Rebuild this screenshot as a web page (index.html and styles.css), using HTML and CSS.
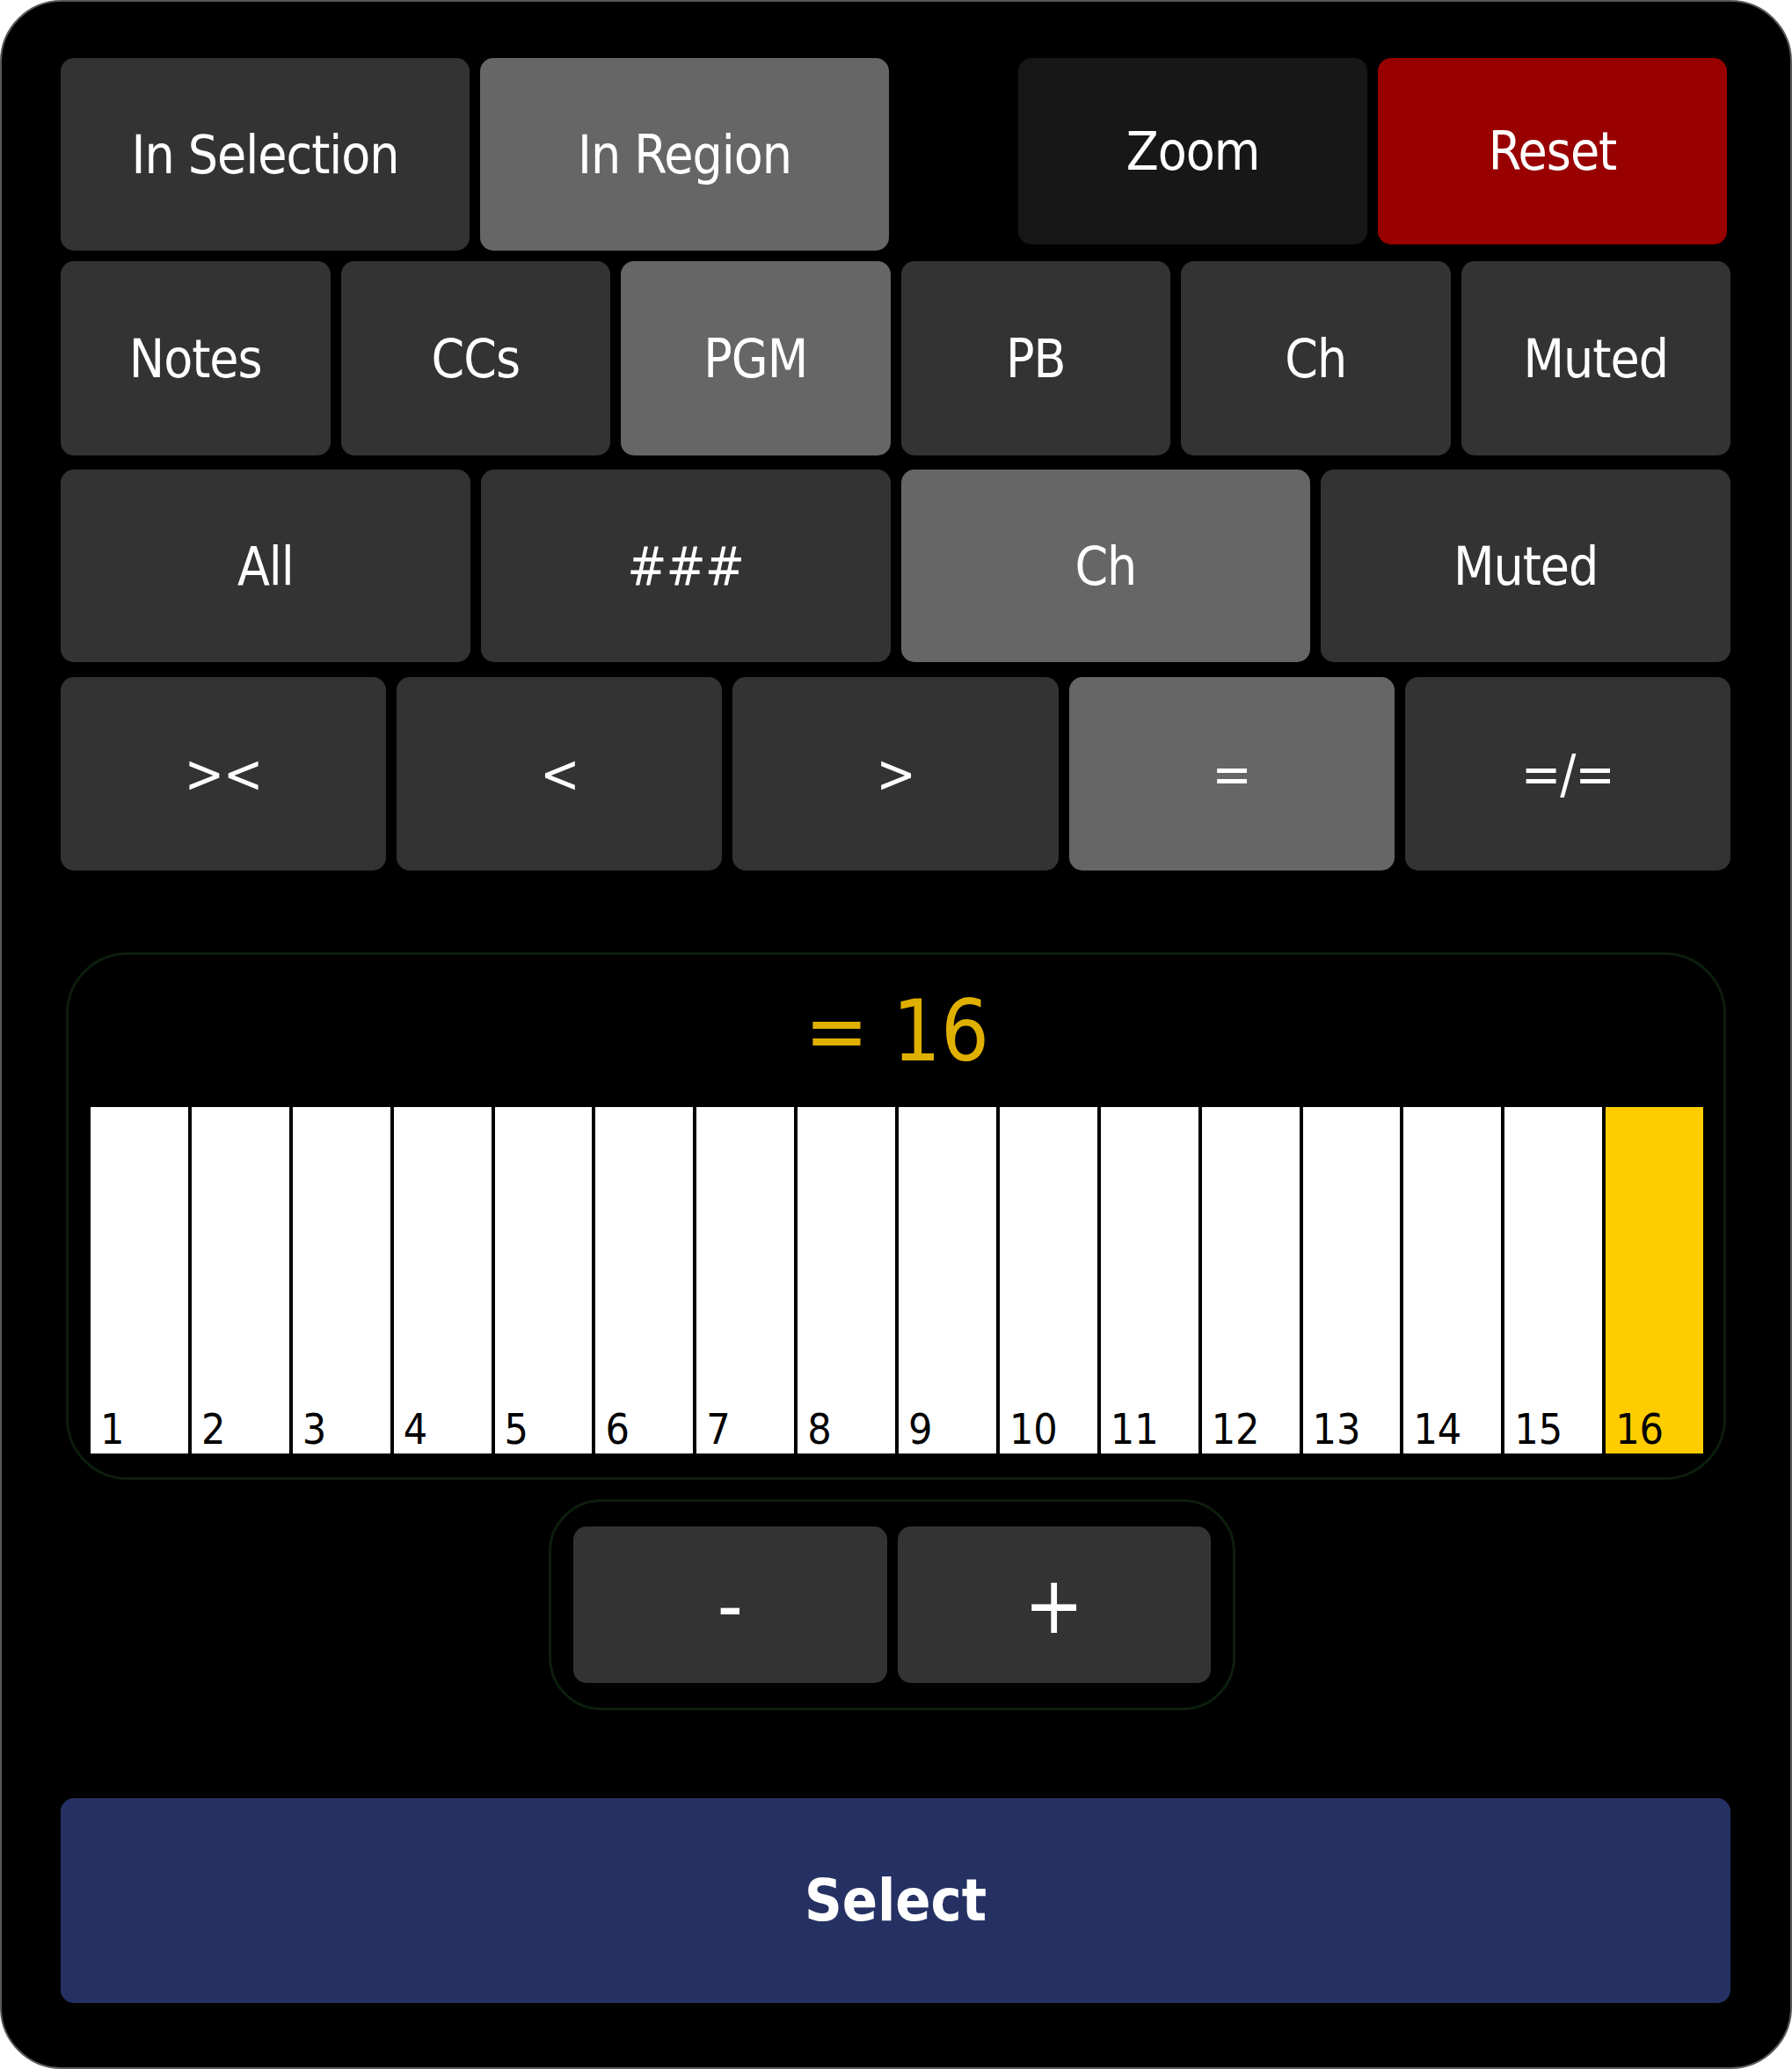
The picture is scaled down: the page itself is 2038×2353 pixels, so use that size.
FILE: index.html
```html
<!DOCTYPE html>
<html lang="en">
<head>
    <meta charset="UTF-8">
    <meta name="viewport" content="width=device-width, initial-scale=1.0">
    <title>MIDI Filter</title>
    <link rel="stylesheet" href="styles.css">
</head>
<body>
    <div class="panel">
        <div class="row row-top">
            <div class="group">
                <button class="btn wide">In Selection</button>
                <button class="btn wide active">In Region</button>
            </div>
            <div class="group right">
                <button class="btn small zoom">Zoom</button>
                <button class="btn small reset">Reset</button>
            </div>
        </div>

        <div class="row cols-6">
            <button class="btn">Notes</button>
            <button class="btn">CCs</button>
            <button class="btn active">PGM</button>
            <button class="btn">PB</button>
            <button class="btn">Ch</button>
            <button class="btn">Muted</button>
        </div>

        <div class="row cols-4">
            <button class="btn">All</button>
            <button class="btn">###</button>
            <button class="btn active">Ch</button>
            <button class="btn">Muted</button>
        </div>

        <div class="row cols-5">
            <button class="btn">&gt;&lt;</button>
            <button class="btn">&lt;</button>
            <button class="btn">&gt;</button>
            <button class="btn active">=</button>
            <button class="btn">=/=</button>
        </div>

        <div class="channel-box">
            <div class="channel-title">= 16</div>
            <div class="keys">
                <div class="key">1</div>
                <div class="key">2</div>
                <div class="key">3</div>
                <div class="key">4</div>
                <div class="key">5</div>
                <div class="key">6</div>
                <div class="key">7</div>
                <div class="key">8</div>
                <div class="key">9</div>
                <div class="key">10</div>
                <div class="key">11</div>
                <div class="key">12</div>
                <div class="key">13</div>
                <div class="key">14</div>
                <div class="key">15</div>
                <div class="key selected">16</div>
            </div>
        </div>

        <div class="stepper">
            <button class="btn step minus">-</button>
            <button class="btn step plus">+</button>
        </div>

        <button class="btn select">Select</button>
    </div>
</body>
</html>
```

FILE: styles.css
```css
html, body {
    margin: 0;
    padding: 0;
    background: #fff;
}
body {
    font-family: "DejaVu Sans Condensed", "DejaVu Sans", sans-serif;
    font-stretch: condensed;
}
.panel {
    box-sizing: border-box;
    width: 2038px;
    height: 2353px;
    background: #000;
    border: 2px solid #5a5a5a;
    border-radius: 70px;
    padding: 64px 68px 0 67px;
}
.row {
    display: grid;
    gap: 12px;
    height: 220px;
}
.row-top {
    display: flex;
    justify-content: space-between;
    align-items: flex-start;
    height: 219px;
    margin-bottom: 12px;
}
.cols-6 {
    grid-template-columns: repeat(6, 1fr);
    height: 221px;
    margin-bottom: 16px;
}
.cols-4 {
    grid-template-columns: repeat(4, 1fr);
    height: 219px;
    margin-bottom: 17px;
}
.cols-5 {
    grid-template-columns: repeat(5, 1fr);
}
.group {
    display: flex;
    gap: 12px;
    height: 100%;
}
.group.right {
    height: 212px;
    margin-right: 4px;
}
.btn {
    font-family: inherit;
    font-stretch: condensed;
    font-size: 60px;
    letter-spacing: -1px;
    color: #fff;
    background: #333;
    border: none;
    border-radius: 15px;
    padding: 0;
    cursor: pointer;
}
.btn.active {
    background: #666;
}
.btn.wide {
    width: 465px;
}
.btn.small {
    width: 397px;
}
.btn.zoom {
    background: #171717;
}
.btn.reset {
    background: #990000;
}
.channel-box {
    box-sizing: border-box;
    height: 600px;
    margin: 93px 5px 0 6px;
    border: 3px solid #0c1f0c;
    border-radius: 70px;
    padding: 0 23px 27px 25px;
    display: flex;
    flex-direction: column;
}
.channel-title {
    height: 173px;
    display: flex;
    align-items: center;
    justify-content: center;
    color: #e0b000;
    font-size: 96px;
}
.keys {
    flex: 1;
    display: flex;
    gap: 4px;
    background: #000;
}
.key {
    flex: 1;
    background: #fff;
    color: #000;
    font-size: 48px;
    line-height: 1;
    display: flex;
    align-items: flex-end;
    padding: 0 0 4px 11px;
}
.key.selected {
    background: #ffcc00;
}
.stepper {
    box-sizing: border-box;
    width: 781px;
    height: 240px;
    margin: 22px 0 0 555px;
    border: 3px solid #0c1f0c;
    border-radius: 60px;
    padding: 28px 25px;
    display: flex;
    gap: 12px;
}
.btn.step {
    flex: 1;
    font-size: 90px;
    letter-spacing: 0;
}
.btn.select {
    display: block;
    width: 100%;
    height: 233px;
    margin-top: 100px;
    background: #263163;
    font-size: 66px;
    font-weight: bold;
    letter-spacing: 0;
}
```
